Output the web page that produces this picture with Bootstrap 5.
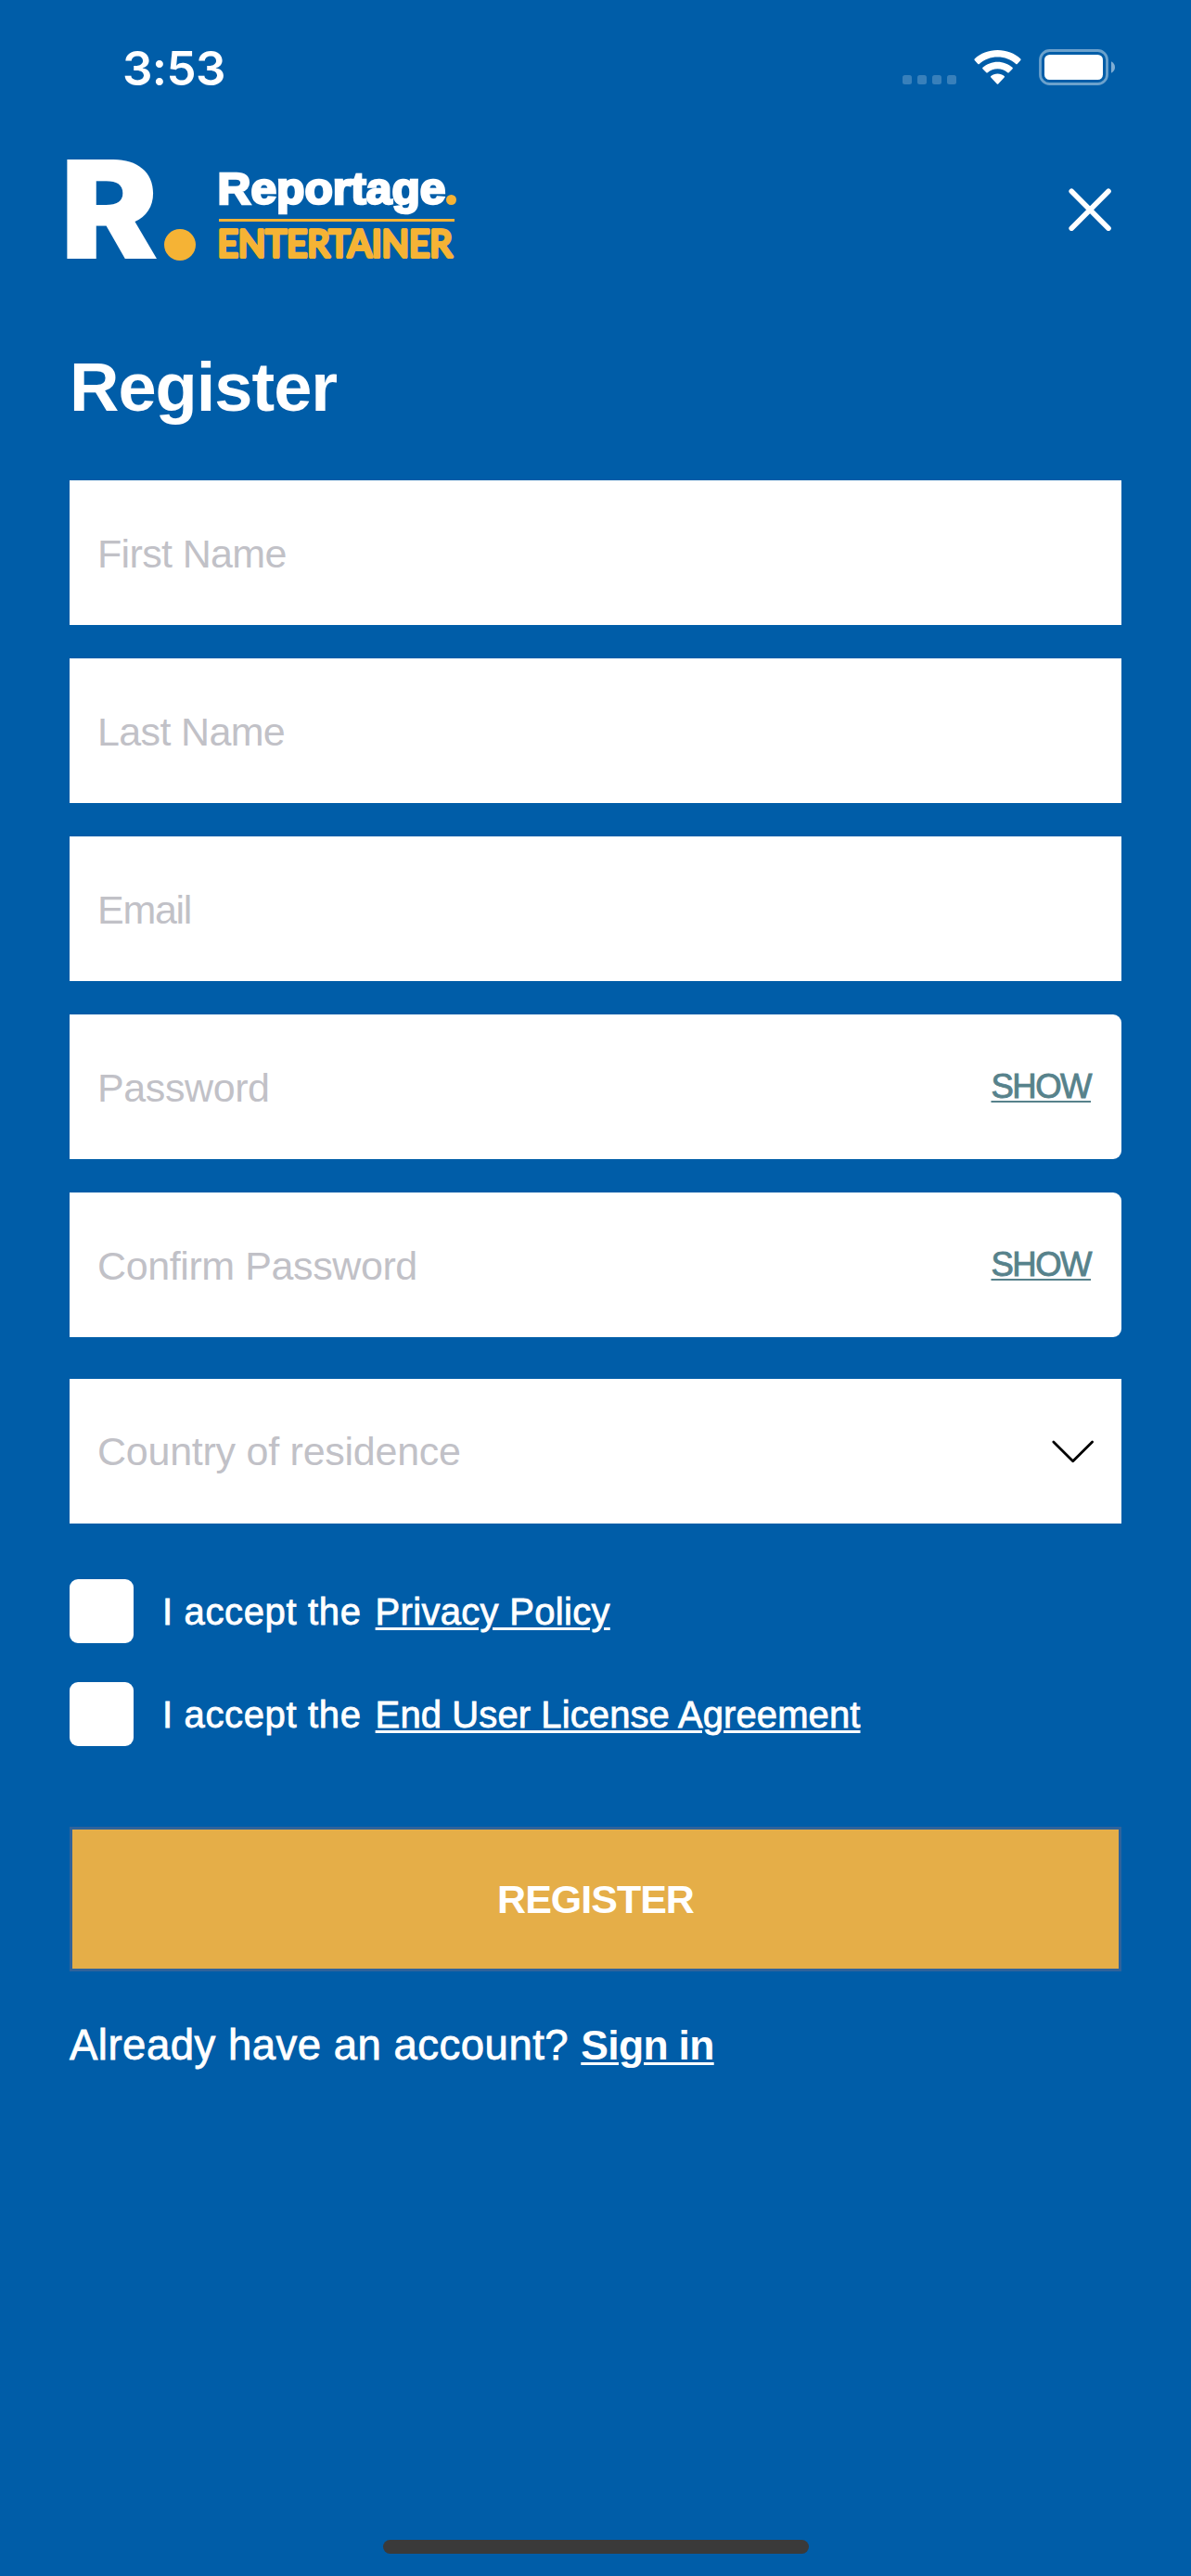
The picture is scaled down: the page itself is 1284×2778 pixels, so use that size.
<!DOCTYPE html>
<html lang="en">
<head>
<meta charset="utf-8">
<meta name="viewport" content="width=device-width, initial-scale=1">
<title>Register</title>
<link rel="stylesheet" href="https://cdn.jsdelivr.net/npm/bootstrap@5.3.0/dist/css/bootstrap.min.css">
<style>
  body { background: #005da8; color: #fff; font-family: "Liberation Sans", Arial, sans-serif; width: 1284px; height: 2778px; overflow: hidden; }
  svg { display: block; }
  .status-bar { height: 150px; padding: 52px 82px 0 132px; }
  .clock { font: 600 51px/43px Inter, sans-serif; letter-spacing: -.6px; }
  .brand-bar { height: 150px; padding: 0 86px 0 50px; }
  .btn-x { margin-top: 53px; }
  .page-title { font-size: 74px; line-height: 84px; letter-spacing: -1px; margin: 76px 0 58px; }
  .content { padding: 0 75px; }
  .fields { gap: 36px; }
  .field, .field .form-control { height: 156px; background: #fff; }
  .field .form-control { border: 0; border-radius: 0; padding: 2px 30px 0; font-size: 43px; letter-spacing: -.65px; min-width: 0; box-shadow: none; }
  .field .form-control::placeholder { color: #c1c1c7; opacity: 1; }
  .field .form-control[type=email] { letter-spacing: -1.3px; }
  .field.secret { border-radius: 0 9px 9px 0; }
  .field.secret .form-control { background: transparent; letter-spacing: -.4px; }
  .field.country .form-control { letter-spacing: -.25px; padding-top: 0; }
  .reveal { color: #57828b; font-size: 36.5px; line-height: 42px; letter-spacing: -1.5px; margin-right: 33px; -webkit-text-stroke: .9px #57828b; text-decoration-thickness: 2px; text-underline-offset: 3px; }
  .country { margin-top: 45px; }
  .terms { margin-top: 60px; gap: 42px; }
  .terms label { font-size: 40px; line-height: 67px; padding-top: 2px; letter-spacing: .65px; }
  .medium { -webkit-text-stroke: .8px #fff; }
  .medium a { color: #fff; text-decoration-thickness: 2.5px; text-underline-offset: 3px; }
  .terms a { letter-spacing: .1px; margin-left: 15px; }
  .terms a.pp { letter-spacing: .3px; }
  .tick.form-check-input { width: 69px; height: 69px; border: 0; border-radius: 9px; margin: 0 31px 0 0; background: #fff; flex: none; }
  .btn-gold { height: 156px; margin-top: 87px; background: #e5ae48; border: 3px solid #30639b; border-radius: 0; color: #fff; font-size: 43px; letter-spacing: -1px; }
  .signin { margin-top: 53px; font-size: 45.5px; line-height: 54px; letter-spacing: .5px; }
  .signin a { font-size: 44.5px; letter-spacing: -.7px; text-decoration-thickness: 3px; -webkit-text-stroke: 0; }
  .home-bar { width: 459px; height: 15px; border-radius: 8px; background: #3a3a3a; margin-bottom: 24px; }
</style>
</head>
<body class="d-flex flex-column">
  <header>
    <div class="status-bar d-flex justify-content-between align-items-start">
      <span class="clock">3:53</span>
      <svg width="230" height="42" viewBox="972 52 230 42" fill="#fff">
        <g fill-opacity=".22"><rect x="973" y="81" width="10" height="10" rx="2.5"/><rect x="989" y="81" width="10" height="10" rx="2.5"/><rect x="1005" y="81" width="10" height="10" rx="2.5"/><rect x="1021" y="81" width="10" height="10" rx="2.5"/></g>
        <path d="M1075.5 54C1066 54 1057 57.500 1050.700 63.500Q1050 64.300 1050.700 65L1054.300 69Q1055 69.700 1055.800 69C1061 64.200 1068 61.600 1075.500 61.600S1090 64.200 1095.200 69Q1096 69.700 1096.700 69L1100.300 65Q1101 64.300 1100.300 63.500C1094 57.500 1085 54 1075.500 54Z"/>
        <path d="M1075.500 66.700C1069.400 66.700 1063.800 69 1059.500 72.800Q1058.700 73.500 1059.400 74.200L1063.300 78.200Q1064 78.900 1064.800 78.200C1067.700 75.700 1071.400 74.300 1075.500 74.300S1083.300 75.700 1086.200 78.200Q1087 78.900 1087.700 78.200L1091.600 74.200Q1092.300 73.500 1091.500 72.800C1087.200 69 1081.600 66.700 1075.500 66.700Z"/>
        <path d="M1075.500 79.600C1072.700 79.600 1070.200 80.500 1068.300 82Q1067.600 82.700 1068.300 83.400L1074.800 90.400Q1075.500 91.200 1076.200 90.400L1082.700 83.400Q1083.400 82.700 1082.700 82C1080.800 80.500 1078.300 79.600 1075.500 79.600Z"/>
        <rect x="1121.500" y="54.500" width="72" height="36" rx="10" fill="none" stroke="#fff" stroke-opacity=".42" stroke-width="2.800"/>
        <rect x="1126" y="59" width="63" height="27" rx="5.500"/>
        <path d="M1198 66.300Q1202 68.500 1202 72.500T1198 78.700Z" fill-opacity=".5"/>
      </svg>
    </div>
    <div class="brand-bar d-flex justify-content-between align-items-start">
      <svg width="460" height="150" viewBox="50 150 460 150" fill="#fff" overflow="visible">
        <text x="65" y="279" font-family="Inter, sans-serif" font-weight="900" font-size="147" textLength="106" lengthAdjust="spacingAndGlyphs">R</text>
        <circle cx="194" cy="264" r="17" fill="#f5b335"/>
        <text x="234.500" y="220" font-family="'Liberation Sans', sans-serif" font-weight="700" font-size="48" textLength="246" lengthAdjust="spacingAndGlyphs" stroke="#fff" stroke-width="2.600">Reportage</text>
        <circle cx="486.500" cy="215.500" r="5.500" fill="#f5b335"/>
        <path d="M236 236h254v3H236z" fill="#f5b335"/>
        <text x="234.500" y="277" font-family="Lato, sans-serif" font-size="40" textLength="253" lengthAdjust="spacingAndGlyphs" fill="#f5b335" stroke="#f5b335" stroke-width="4" stroke-linejoin="round">ENTERTAINER</text>
      </svg>
      <svg class="btn-x" width="46" height="46" viewBox="1152 203 46 46" role="button" aria-label="Close"><path d="M1155.200 206.200l39.800 40M1195 206.200l-39.800 40" stroke="#fff" stroke-width="5.600" stroke-linecap="round"/></svg>
    </div>
  </header>
  <main class="content flex-grow-1">
    <h1 class="page-title fw-bold">Register</h1>
    <form>
      <div class="fields d-flex flex-column">
        <div class="field"><input class="form-control" type="text" placeholder="First Name"></div>
        <div class="field"><input class="form-control" type="text" placeholder="Last Name"></div>
        <div class="field"><input class="form-control" type="email" placeholder="Email"></div>
        <div class="field secret d-flex align-items-center"><input class="form-control flex-grow-1" type="password" placeholder="Password"><a class="reveal">SHOW</a></div>
        <div class="field secret d-flex align-items-center"><input class="form-control flex-grow-1" type="password" placeholder="Confirm Password"><a class="reveal">SHOW</a></div>
      </div>
      <div class="field country d-flex align-items-center">
        <input class="form-control flex-grow-1" type="text" placeholder="Country of residence">
        <svg class="me-4 flex-shrink-0" width="56" height="30" viewBox="1129 1550 56 30"><path d="M1135.800 1555l20.900 20.700 20.900-20.700" fill="none" stroke="#000" stroke-width="2.800" stroke-linecap="round" stroke-linejoin="round"/></svg>
      </div>
      <div class="terms d-flex flex-column">
        <div class="d-flex align-items-center"><input id="pp" class="form-check-input tick" type="checkbox"><label class="medium" for="pp">I accept the<a class="pp" href="#">Privacy Policy</a></label></div>
        <div class="d-flex align-items-center"><input id="eula" class="form-check-input tick" type="checkbox"><label class="medium" for="eula">I accept the<a href="#">End User License Agreement</a></label></div>
      </div>
      <button class="btn btn-gold w-100 fw-bold" type="button">REGISTER</button>
    </form>
    <p class="signin medium mb-0">Already have an account? <a class="fw-bold" href="#">Sign in</a></p>
  </main>
  <footer class="d-flex justify-content-center"><div class="home-bar"></div></footer>
  <script src="https://cdn.jsdelivr.net/npm/bootstrap@5.3.0/dist/js/bootstrap.bundle.min.js"></script>
</body>
</html>
